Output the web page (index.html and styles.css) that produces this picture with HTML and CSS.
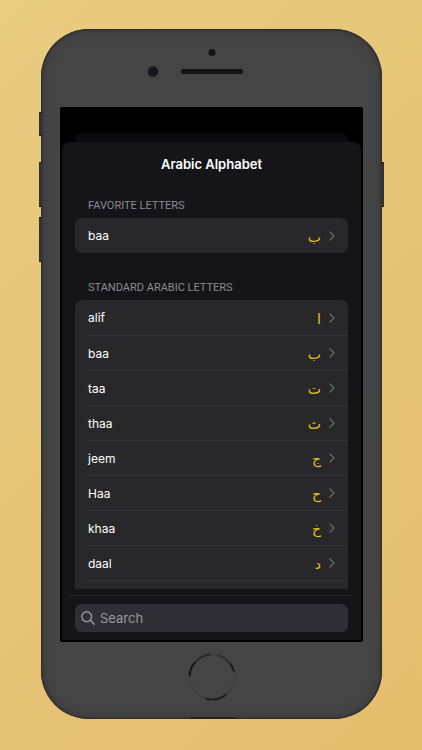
FILE: index.html
```html
<!DOCTYPE html>
<html lang="en">
<head>
  <meta charset="UTF-8" />
  <meta name="viewport" content="width=device-width, initial-scale=1.0"/>
  <title>Arabic Alphabet</title>
  <link rel="stylesheet" href="styles.css">
</head>
<body>
  <div class="phone">
    <!-- Side buttons -->
    <span class="side-btn mute"></span>
    <span class="side-btn vol-up"></span>
    <span class="side-btn vol-down"></span>
    <span class="side-btn power"></span>

    <div class="bezel-top">
      <svg width="120" height="40" viewBox="0 0 120 40">
        <circle cx="60" cy="5.500" r="3.5" fill="#151516"/>
        <circle cx="1" cy="24.500" r="5.3" fill="#17181d"/>
        <circle cx="1" cy="24.500" r="2.5" fill="#10152a"/>
        <rect x="29" y="22" width="62" height="5" rx="2.5" fill="#141415"/>
      </svg>
    </div>

    <div class="screen">
      <div class="back-sheet"></div>
      <main class="sheet">
        <h1>Arabic Alphabet</h1>

        <div class="content">
          <h2>Favorite Letters</h2>
          <ul class="letters favorites">
            <li><a href="#baa"><span class="name">baa</span><span class="glyph" lang="ar">ب</span><svg class="chevron" viewBox="0 0 6 10"><path d="M1 1l4 4-4 4"/></svg></a></li>
          </ul>

          <h2>Standard Arabic Letters</h2>
          <ul class="letters">
            <li><a href="#alif"><span class="name">alif</span><span class="glyph" lang="ar">ا</span><svg class="chevron" viewBox="0 0 6 10"><path d="M1 1l4 4-4 4"/></svg></a></li>
            <li><a href="#baa"><span class="name">baa</span><span class="glyph" lang="ar">ب</span><svg class="chevron" viewBox="0 0 6 10"><path d="M1 1l4 4-4 4"/></svg></a></li>
            <li><a href="#taa"><span class="name">taa</span><span class="glyph" lang="ar">ت</span><svg class="chevron" viewBox="0 0 6 10"><path d="M1 1l4 4-4 4"/></svg></a></li>
            <li><a href="#thaa"><span class="name">thaa</span><span class="glyph" lang="ar">ث</span><svg class="chevron" viewBox="0 0 6 10"><path d="M1 1l4 4-4 4"/></svg></a></li>
            <li><a href="#jeem"><span class="name">jeem</span><span class="glyph" lang="ar">ج</span><svg class="chevron" viewBox="0 0 6 10"><path d="M1 1l4 4-4 4"/></svg></a></li>
            <li><a href="#Haa"><span class="name">Haa</span><span class="glyph" lang="ar">ح</span><svg class="chevron" viewBox="0 0 6 10"><path d="M1 1l4 4-4 4"/></svg></a></li>
            <li><a href="#khaa"><span class="name">khaa</span><span class="glyph" lang="ar">خ</span><svg class="chevron" viewBox="0 0 6 10"><path d="M1 1l4 4-4 4"/></svg></a></li>
            <li><a href="#daal"><span class="name">daal</span><span class="glyph" lang="ar">د</span><svg class="chevron" viewBox="0 0 6 10"><path d="M1 1l4 4-4 4"/></svg></a></li>
            <li class="spacer"></li>
          </ul>
        </div>

        <div class="search-bar">
          <label class="search">
            <svg width="14" height="14" viewBox="0 0 14 14"><circle cx="5.7" cy="5.7" r="4.9"/><path d="M9.3 9.3l4 4"/></svg>
            <input type="search" placeholder="Search" aria-label="Search">
          </label>
        </div>
      </main>
    </div>

    <div class="bezel-bottom">
      <button class="home" aria-label="Home">
        <svg width="48" height="48" viewBox="0 0 48 48">
          <circle cx="24" cy="24" r="22.5" stroke="#404040"/>
          <path d="M1.5 23A22.5 22.5 0 0 1 7 9.3" stroke="#151515"/>
          <path d="M7 9.3A22.5 22.5 0 0 1 23 1.5" stroke="#292929"/>
          <path d="M29 2A22.5 22.5 0 0 1 42 10.5" stroke="#303030"/>
          <path d="M42 10.5A22.5 22.5 0 0 1 46 18.5" stroke="#191919"/>
          <path d="M38 41.6A22.5 22.5 0 0 1 18 45.700" stroke="#202020"/>
        </svg>
      </button>
    </div>
    <span class="port"></span>
  </div>
</body>
</html>
```
FILE: styles.css
```css
* { box-sizing: border-box; margin: 0; padding: 0; font-family: Inter, 'Liberation Sans', sans-serif; }

body {
  height: 100vh;
  padding: 29px 40px 31px 41px;
  background: linear-gradient(135deg, #e8cc80, #e4bd6c);
  color: #fff;
}

.phone {
  position: relative;
  display: flex;
  flex-direction: column;
  height: 100%;
  padding: 0 19px;
  border-radius: 48px;
  background: #454545;
  box-shadow: inset 0 0 2px 1px #2b2b2b, inset 0 0 10px 2px #3b3b3e;
}

/* Hardware */
.side-btn {
  position: absolute;
  left: -2px;
  width: 3px;
  height: 45px;
  background: #333;
  border-top: 1px solid #1c1c1c;
  border-bottom: 1px solid #1c1c1c;
}

.mute { top: 83px; height: 24px; }
.vol-up { top: 133px; }
.vol-down { top: 188px; }
.power { top: 133px; left: auto; right: -2px; }

.port {
  position: absolute;
  bottom: 0;
  left: 50%;
  width: 46px;
  height: 2px;
  margin-left: -22px;
  background: #242424;
}

.bezel-top {
  display: flex;
  justify-content: center;
  height: 78px;
  padding-top: 18px;
}

.bezel-top svg { overflow: visible; }

.bezel-bottom {
  display: flex;
  align-items: center;
  justify-content: center;
  height: 77px;
  padding-bottom: 7px;
}

.home {
  display: flex;
  border: none;
  border-radius: 50%;
  background: none;
}

.home svg {
  fill: none;
  stroke-width: 2;
}

/* Screen */
.screen {
  flex: 1;
  display: flex;
  flex-direction: column;
  min-height: 0;
  padding: 26px 2px 2px;
  border-radius: 2px;
  background: #000;
}

.back-sheet {
  height: 9px;
  margin: 0 13px;
  border-radius: 8px 8px 0 0;
  background: #0b0b0d;
}

.sheet {
  flex: 1;
  display: flex;
  flex-direction: column;
  min-height: 0;
  border-radius: 8px 8px 0 0;
  background: #151419;
}

h1 {
  padding: 12px 0 10px;
  font-size: 13px;
  font-weight: 600;
  line-height: 20px;
  text-align: center;
}

.content {
  flex: 1;
  min-height: 0;
  padding: 0 13px;
  overflow: hidden;
}

h2 {
  padding: 14px 13px 4px;
  color: #8b8b91;
  font-family: Roboto, sans-serif;
  font-size: 11px;
  font-weight: 400;
  line-height: 16px;
  text-transform: uppercase;
}

.letters {
  list-style: none;
  border-radius: 7px;
  background: #28282a;
}

.favorites { margin-bottom: 13px; }

.letters li { padding-left: 13px; }

.letters a {
  display: flex;
  align-items: center;
  height: 35px;
  padding-right: 13px;
  color: #fff;
  font-size: 12px;
  text-decoration: none;
}

.letters li + li a,
.letters .spacer::before {
  border-top: 1px solid #343436;
}

.letters .spacer::before {
  content: "";
  display: block;
  height: 35px;
}

.name { flex: 1; }

.glyph {
  padding-top: 2px;
  color: #e6c41c;
  font-family: 'DejaVu Sans', sans-serif;
  font-size: 14px;
  line-height: 20px;
}

.chevron {
  width: 6px;
  height: 10px;
  margin-left: 8px;
  fill: none;
  stroke: #626266;
  stroke-width: 1.6;
  stroke-linecap: round;
  stroke-linejoin: round;
}

/* Search */
.search-bar {
  margin: 6px 7px 0;
  padding: 8px 6px;
  border-top: 1px solid #242429;
}

.search {
  display: flex;
  align-items: center;
  gap: 5px;
  height: 28px;
  padding: 0 6px;
  border-radius: 7px;
  background: #302f35;
}

.search svg {
  fill: none;
  stroke: #98989f;
  stroke-width: 1.4;
  stroke-linecap: round;
}

.search input {
  flex: 1;
  min-width: 0;
  border: none;
  outline: none;
  background: none;
  color: #fff;
  font-size: 13px;
}

.search input::placeholder { color: #98989f; }
```
